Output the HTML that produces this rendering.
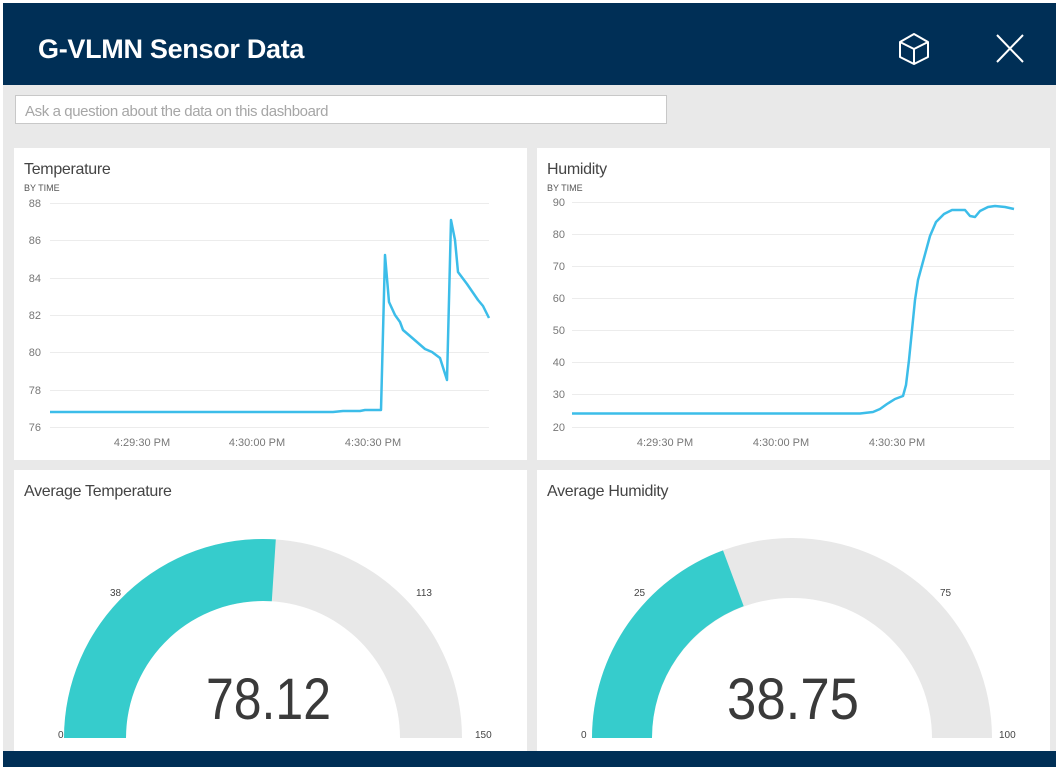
<!DOCTYPE html>
<html><head><meta charset="utf-8"><style>
html,body{margin:0;padding:0;width:1058px;height:767px;overflow:hidden;background:#fff;font-family:"Liberation Sans",sans-serif;}
.frame{position:absolute;left:3px;top:3px;width:1053px;height:764px;background:#e9e9e9;}
.hdr{position:absolute;left:3px;top:3px;width:1053px;height:82px;background:#002f56;}
.hdr h1{position:absolute;left:35px;top:31px;margin:0;color:#fff;font-size:27px;font-weight:bold;letter-spacing:-0.3px;}
.q{position:absolute;left:15px;top:95px;width:652px;height:29px;background:#fff;border:1px solid #c8c8c8;box-sizing:border-box;}
.q span{position:absolute;left:9px;top:7px;font-size:15px;color:#a6a6a6;letter-spacing:-0.4px;}
.card{position:absolute;background:#fff;}
.t{position:absolute;font-size:16px;color:#444;letter-spacing:-0.3px;}
.s{position:absolute;font-size:9px;color:#555;}
.bot{position:absolute;left:3px;top:751px;width:1053px;height:16px;background:#002f56;}
svg{position:absolute;left:0;top:0;}
</style></head><body>
<div class="frame"></div>
<div class="hdr"><h1>G-VLMN Sensor Data</h1></div>
<div class="q"><span>Ask a question about the data on this dashboard</span></div>
<div class="card" style="left:14px;top:148px;width:513px;height:312px"></div>
<div class="card" style="left:537px;top:148px;width:513px;height:312px"></div>
<div class="card" style="left:14px;top:470px;width:513px;height:281px"></div>
<div class="card" style="left:537px;top:470px;width:513px;height:281px"></div>
<div class="t" style="left:24px;top:161px">Temperature</div>
<div class="s" style="left:24px;top:183px">BY TIME</div>
<div class="t" style="left:547px;top:161px">Humidity</div>
<div class="s" style="left:547px;top:183px">BY TIME</div>
<div class="t" style="left:24px;top:483px">Average Temperature</div>
<div class="t" style="left:547px;top:483px">Average Humidity</div>
<div class="bot"></div>
<svg width="1058" height="767" font-family="Liberation Sans, sans-serif">
<g fill="none" stroke="#fff" stroke-width="2" stroke-linejoin="round">
<path d="M914 34 L928 42 L928 57 L914 64 L900 57 L900 42 Z M900 42 L914 49 L928 42 M914 49 L914 64"/>
<path d="M997 35 L1023 62 M1023 35 L997 62"/>
</g>
<g stroke="#ececec" stroke-width="1">
<line x1="50" x2="489" y1="203.5" y2="203.5"/><line x1="50" x2="489" y1="240.5" y2="240.5"/><line x1="50" x2="489" y1="278.5" y2="278.5"/><line x1="50" x2="489" y1="315.5" y2="315.5"/><line x1="50" x2="489" y1="352.5" y2="352.5"/><line x1="50" x2="489" y1="390.5" y2="390.5"/><line x1="50" x2="489" y1="427.5" y2="427.5"/>
<line x1="572" x2="1014" y1="202.5" y2="202.5"/><line x1="572" x2="1014" y1="234.5" y2="234.5"/><line x1="572" x2="1014" y1="266.5" y2="266.5"/><line x1="572" x2="1014" y1="298.5" y2="298.5"/><line x1="572" x2="1014" y1="330.5" y2="330.5"/><line x1="572" x2="1014" y1="362.5" y2="362.5"/><line x1="572" x2="1014" y1="394.5" y2="394.5"/><line x1="572" x2="1014" y1="427.5" y2="427.5"/>
</g>
<g font-size="11" fill="#777" text-anchor="end">
<text x="41" y="207">88</text><text x="41" y="244">86</text><text x="41" y="282">84</text><text x="41" y="319">82</text><text x="41" y="356">80</text><text x="41" y="394">78</text><text x="41" y="431">76</text>
<text x="565" y="206">90</text><text x="565" y="238">80</text><text x="565" y="270">70</text><text x="565" y="302">60</text><text x="565" y="334">50</text><text x="565" y="366">40</text><text x="565" y="398">30</text><text x="565" y="431">20</text>
</g>
<g font-size="11" fill="#777" text-anchor="middle">
<text x="142" y="446">4:29:30 PM</text><text x="257" y="446">4:30:00 PM</text><text x="373" y="446">4:30:30 PM</text>
<text x="665" y="446">4:29:30 PM</text><text x="781" y="446">4:30:00 PM</text><text x="897" y="446">4:30:30 PM</text>
</g>
<g fill="none" stroke="#3cbde9" stroke-width="2.5" stroke-linejoin="round">
<polyline points="50,412 333,412 343,411 360,411 365,410 381,410 385,255 389,302 395,315 400,322 403,330 410,336 425,349 432,352 440,358 447,380 451,220 455,240 458,272 467,284 478,300 483,306 489,318"/>
<polyline points="572,413.5 860,413.5 873,412 880,409 887,404 895,399 903,396 906,385 909,360 912,330 915,300 918,280 924,258 930,236 936,222 944,214 952,210 965,210 970,216 975,217 980,211 988,207 995,206 1005,207 1014,209"/>
</g>
<path d="M64 738 A199 199 0 0 1 462 738 L400 738 A137 137 0 0 0 126 738 Z" fill="#e8e8e8"/>
<path d="M64 738 A199 199 0 0 1 275.8 539.4 L271.8 601.3 A137 137 0 0 0 126 738 Z" fill="#36cccc"/>
<path d="M592 738 A200 200 0 0 1 992 738 L932 738 A140 140 0 0 0 652 738 Z" fill="#e8e8e8"/>
<path d="M592 738 A200 200 0 0 1 723 550.4 L743.7 606.1 A140 140 0 0 0 652 738 Z" fill="#36cccc"/>
<g font-size="10" fill="#444">
<text x="58" y="738">0</text><text x="110" y="596">38</text><text x="416" y="596">113</text><text x="475" y="738">150</text>
<text x="581" y="738">0</text><text x="634" y="596">25</text><text x="940" y="596">75</text><text x="999" y="738">100</text>
</g>
<g font-size="58" fill="#3a3a3a">
<text x="206" y="719" textLength="125" lengthAdjust="spacingAndGlyphs">78.12</text>
<text x="727" y="719" textLength="132" lengthAdjust="spacingAndGlyphs">38.75</text>
</g>
</svg>
</body></html>
